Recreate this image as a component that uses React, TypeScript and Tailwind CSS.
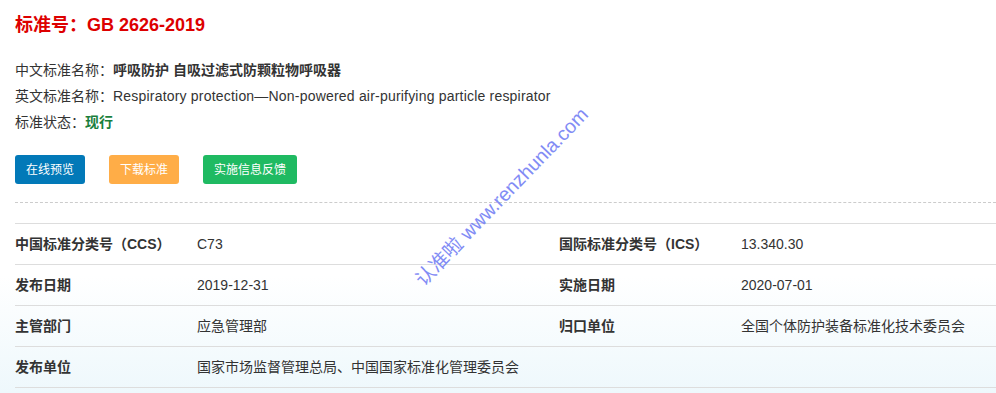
import React from "react";

const ROWS: [string, string, string?, string?][] = [
  ["中国标准分类号（CCS）", "C73", "国际标准分类号（ICS）", "13.340.30"],
  ["发布日期", "2019-12-31", "实施日期", "2020-07-01"],
  ["主管部门", "应急管理部", "归口单位", "全国个体防护装备标准化技术委员会"],
  ["发布单位", "国家市场监督管理总局、中国国家标准化管理委员会"],
];

const font = { fontFamily: '"Liberation Sans", Arial, "Noto Sans CJK SC", sans-serif' };

export default function App() {
  return (
    <div
      style={font}
      className="relative h-[393px] w-[996px] overflow-hidden bg-gradient-to-b from-white from-[70%] to-[#eef8fc] pl-[15px] text-[14px] text-[#333]"
    >
      <h1 className="pt-[13px] text-[18px] font-bold leading-[24px] text-[#dd0000]">标准号：GB 2626-2019</h1>

      <div className="mt-[20px] leading-[26px]">
        <div>
          中文标准名称：<b className="font-bold">呼吸防护 自吸过滤式防颗粒物呼吸器</b>
        </div>
        <div>
          英文标准名称：
          <span className="tracking-[0.2px]">Respiratory protection—Non-powered air-purifying particle respirator</span>
        </div>
        <div>
          标准状态：<b className="font-bold text-[#1a7f3c]">现行</b>
        </div>
      </div>

      <div className="mt-[20px] flex gap-[24px]">
        <button className="h-[29px] w-[70px] rounded-[3px] bg-[#0279b8] text-[12px] text-white">在线预览</button>
        <button className="h-[29px] w-[70px] rounded-[3px] bg-[#ffad47] text-[12px] text-white">下载标准</button>
        <button className="h-[29px] w-[94px] rounded-[3px] bg-[#1fba62] text-[12px] text-white">实施信息反馈</button>
      </div>

      <div className="mt-[18px] border-t border-dashed border-[#ccc]" />

      <div className="mt-[20px] border-t border-[#ddd]">
        {ROWS.map((r) => (
          <div
            key={r[0]}
            className="grid h-[41px] grid-cols-[182px_362px_182px_1fr] items-center border-b border-[#ddd]"
          >
            <div className="font-bold">{r[0]}</div>
            <div>{r[1]}</div>
            <div className="font-bold">{r[2] ?? ""}</div>
            <div>{r[3] ?? ""}</div>
          </div>
        ))}
      </div>

      {/* 水印 */}
      <span className="pointer-events-none absolute left-[502px] top-[197px] -translate-x-1/2 -translate-y-1/2 -rotate-[46deg] whitespace-nowrap text-[19.5px] text-[#7480f5] opacity-90">
        认准啦 www.renzhunla.com
      </span>
    </div>
  );
}
